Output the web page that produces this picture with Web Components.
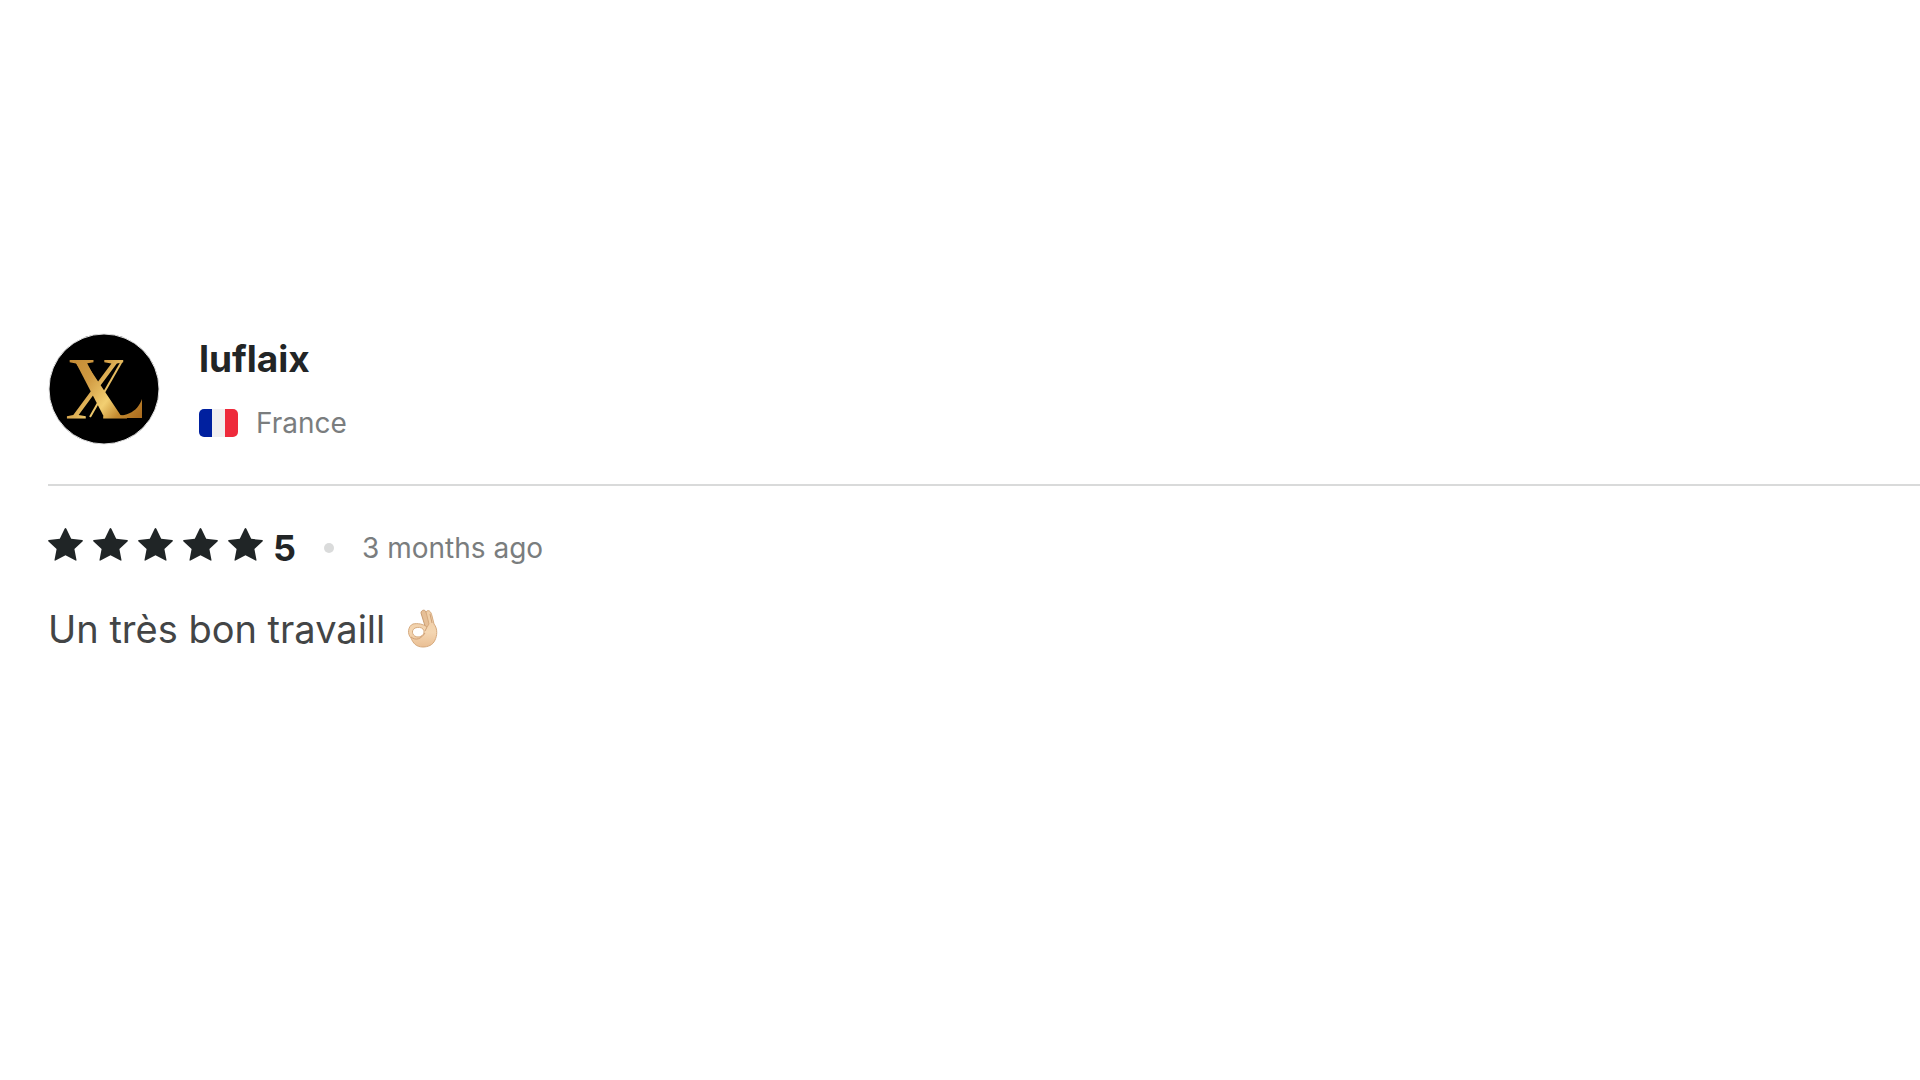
<!DOCTYPE html>
<html lang="en">
<head>
<meta charset="utf-8">
<meta name="viewport" content="width=device-width, initial-scale=1">
<title>Review</title>
<style>
  body {
    margin: 0;
    background: #fff;
    color: #434546;
    font-family: Inter, "Liberation Sans", sans-serif;
  }
</style>
</head>
<body>
<review-card>
  <review-author slot="author" name="luflaix" country="France"></review-author>
  <star-rating slot="rating" value="5"></star-rating>
  <time slot="date">3 months ago</time>
  <span>Un très bon travaill</span>
  <ok-hand></ok-hand>
</review-card>

<script>
class ReviewCard extends HTMLElement {
  constructor() {
    super();
    this.attachShadow({ mode: 'open' });
    this.shadowRoot.innerHTML = `
      <style>
        :host {
          display: block;
          padding: 333px 0 48px 48px;
        }

        .review__author {
          padding-bottom: 39px;
          border-bottom: 2px solid #d9dada;
        }

        .review__meta {
          display: flex;
          align-items: center;
          padding-top: 40px;
          font-size: 28px;
          line-height: 44px;
          color: #7a7d7e;
        }

        .review__dot {
          width: 10px;
          height: 10px;
          margin: 0 28px;
          border-radius: 50%;
          background: #dadbdb;
        }

        .review__text {
          display: flex;
          align-items: center;
          gap: 22px;
          margin: 31px 0 0;
          font-size: 38px;
          line-height: 56px;
        }
      </style>
      <article>
        <header class="review__author"><slot name="author"></slot></header>
        <div class="review__meta">
          <slot name="rating"></slot>
          <span class="review__dot"></span>
          <slot name="date"></slot>
        </div>
        <p class="review__text"><slot></slot></p>
      </article>
    `;
  }
}
customElements.define('review-card', ReviewCard);

class ReviewAuthor extends HTMLElement {
  constructor() {
    super();
    this.attachShadow({ mode: 'open' });
  }

  connectedCallback() {
    this.shadowRoot.innerHTML = `
      <style>
        :host {
          display: flex;
          gap: 39px;
        }

        .author__details {
          display: flex;
          flex-direction: column;
          gap: 18px;
        }

        .author__name {
          font-size: 37px;
          font-weight: 700;
          line-height: 52px;
          color: #222526;
        }

        .author__country {
          display: flex;
          align-items: center;
          gap: 18px;
          font-size: 28px;
          line-height: 40px;
          color: #7a7d7e;
        }
      </style>
      <monogram-avatar></monogram-avatar>
      <div class="author__details">
        <div class="author__name">${this.getAttribute('name')}</div>
        <div class="author__country">
          <france-flag></france-flag>
          <span>${this.getAttribute('country')}</span>
        </div>
      </div>
    `;
  }
}
customElements.define('review-author', ReviewAuthor);

class MonogramAvatar extends HTMLElement {
  constructor() {
    super();
    this.attachShadow({ mode: 'open' });
    this.shadowRoot.innerHTML = `
      <style>
        :host {
          display: block;
          flex: none;
          width: 112px;
          height: 112px;
        }

        svg {
          display: block;
        }

        text {
          font-family: "Liberation Serif", serif;
          font-size: 88px;
        }
      </style>
      <svg viewBox="0 0 112 112" width="112" height="112" aria-hidden="true">
        <defs>
          <linearGradient id="gold" gradientUnits="userSpaceOnUse" x1="20" y1="26" x2="96" y2="86">
            <stop offset="0" stop-color="#c48a33"/>
            <stop offset=".3" stop-color="#d09a42"/>
            <stop offset=".58" stop-color="#f2cf72"/>
            <stop offset=".76" stop-color="#c58b30"/>
            <stop offset="1" stop-color="#a5661c"/>
          </linearGradient>
        </defs>
        <circle cx="56" cy="56" r="55" fill="#000" stroke="#e0e0e0"/>
        <text x="17" y="85" fill="url(#gold)">X</text>
        <path d="M27 28H38L67 84H56Z" fill="url(#gold)"/>
        <path d="M74 28 42 84" fill="none" stroke="url(#gold)" stroke-width="2"/>
        <path d="M56 84C78 84 89 80 94 66V85H56Z" fill="url(#gold)"/>
      </svg>
    `;
  }
}
customElements.define('monogram-avatar', MonogramAvatar);

class FranceFlag extends HTMLElement {
  constructor() {
    super();
    this.attachShadow({ mode: 'open' });
    this.shadowRoot.innerHTML = `
      <style>
        :host {
          display: block;
          width: 39px;
          height: 28px;
          border-radius: 5px;
          background: linear-gradient(90deg, #00209f 33%, #f1eff0 33% 66%, #ee2a3b 66%);
        }
      </style>
    `;
  }
}
customElements.define('france-flag', FranceFlag);

class StarRating extends HTMLElement {
  constructor() {
    super();
    this.attachShadow({ mode: 'open' });
  }

  connectedCallback() {
    const value = Number(this.getAttribute('value'));
    const star = `
      <svg viewBox="0 0 35 33" width="35" height="33" aria-hidden="true">
        <path d="M16.6 .8Q17.5 -.8 18.4 .8L23.2 10.8 34.2 12.1Q35.4 12.4 34.5 13.4L26.4 21.1 28.5 31.9Q28.6 33.1 27.5 32.6L17.5 27.3 7.5 32.6Q6.4 33.1 6.5 31.9L8.6 21.1 .5 13.4Q-.4 12.4 .8 12.1L11.8 10.8Z" fill="#202526"/>
      </svg>
    `;
    this.shadowRoot.innerHTML = `
      <style>
        :host {
          display: flex;
          align-items: center;
          gap: 10px;
          color: #222526;
          font-size: 36px;
          font-weight: 700;
        }

        .stars {
          display: flex;
          gap: 10px;
          padding-bottom: 7px;
        }
      </style>
      <span class="stars">${star.repeat(value)}</span>
      <span>${value}</span>
    `;
  }
}
customElements.define('star-rating', StarRating);

class OkHand extends HTMLElement {
  constructor() {
    super();
    this.attachShadow({ mode: 'open' });
    this.shadowRoot.innerHTML = `
      <style>
        :host {
          display: block;
        }

        svg {
          display: block;
        }
      </style>
      <svg viewBox="0 0 32 40" width="32" height="40" role="img" aria-label="OK hand">
        <defs>
          <linearGradient id="skin" x1="0" y1="0" x2="0" y2="1">
            <stop offset="0" stop-color="#efcda5"/>
            <stop offset=".6" stop-color="#f4d6b2"/>
            <stop offset="1" stop-color="#eabf94"/>
          </linearGradient>
        </defs>
        <path d="M14 4C14 1 18 0 19 3L24 13 22 19 18 17Z" fill="#e6bf96" stroke="#c99d72"/>
        <path fill-rule="evenodd" d="M19 3C21 0 24 2 25 7L27 15C31 20 30 27 28 31 26 36 21 38 16 38 9 38 6 34 4 29 0 25 1 17 6 15 11 14 16 15 20 18L22 15ZM8 19C3 22 6 28 11 28 15 28 19 24 16 20 14 18 11 18 8 19Z" fill="url(#skin)" stroke="#d6aa7e"/>
        <path d="M23 5 25 14M4 28C9 32 14 30 18 24M20 18 18 22" fill="none" stroke="#cfa077"/>
      </svg>
    `;
  }
}
customElements.define('ok-hand', OkHand);
</script>
</body>
</html>
